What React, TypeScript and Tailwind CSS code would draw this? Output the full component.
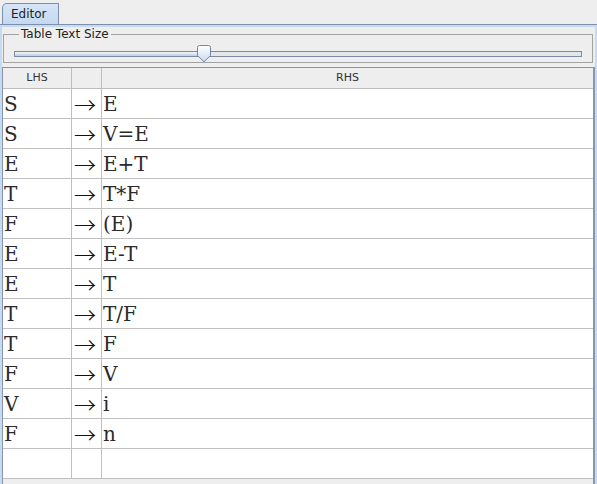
import React from "react";

const rows: [string, string][] = [
  ["S", "E"],
  ["S", "V=E"],
  ["E", "E+T"],
  ["T", "T*F"],
  ["F", "(E)"],
  ["E", "E-T"],
  ["E", "T"],
  ["T", "T/F"],
  ["T", "F"],
  ["F", "V"],
  ["V", "i"],
  ["F", "n"],
  ["", ""],
];

const serif = { fontFamily: '"DejaVu Serif", serif' };
const arrowFont = { fontFamily: '"Noto Sans CJK JP", sans-serif' };

export default function App() {
  return (
    <div
      className="w-[597px] h-[484px] bg-[#eeeeee] overflow-hidden flex flex-col text-[#222]"
      style={{ fontFamily: '"DejaVu Sans", sans-serif' }}
    >
      <div className="h-[24px] flex items-end pl-[2px] shrink-0">
        <div className="h-[21px] w-[57px] border border-b-0 border-[#7d8fab] rounded-tl-[5px] bg-gradient-to-b from-[#d6e5f6] to-[#c4d9f1] text-[12px] pl-[8px] leading-[20px] text-[#222]">
          Editor
        </div>
      </div>
      <div className="border-t border-[#7d8fab] flex-1 min-h-0 flex flex-col">
        <div className="flex-1 min-h-0 border-2 border-b-0 border-[#c6daf2] flex flex-col">
          <fieldset className="ml-[1px] mr-[2px] border border-[#a3a3a3] px-[10px] pb-0 pt-[4px] shrink-0">
            <legend className="ml-[5px] px-[2px] text-[12px] leading-[14px] text-[#222]">
              Table Text Size
            </legend>
            <div className="relative h-[17px]">
              <div className="absolute left-0 right-0 top-[6px] h-[6px] border border-[#7b8ba3] bg-[#e6e6e6] flex">
                <div className="w-[187px] h-full bg-gradient-to-b from-[#f4f8fd] to-[#b9cfea]" />
              </div>
              <svg
                className="absolute top-0 left-[182px]"
                width="16"
                height="18"
                viewBox="0 0 16 18"
              >
                <defs>
                  <linearGradient id="thumb" x1="0" y1="0" x2="0" y2="1">
                    <stop offset="0" stopColor="#ffffff" />
                    <stop offset="1" stopColor="#c9daf0" />
                  </linearGradient>
                </defs>
                <path
                  d="M1.5 2.5 Q1.5 0.5 3.5 0.5 L12.5 0.5 Q14.5 0.5 14.5 2.5 L14.5 10.5 L8 16.8 L1.5 10.5 Z"
                  fill="url(#thumb)"
                  stroke="#6f87b0"
                  strokeWidth="1"
                />
              </svg>
            </div>
          </fieldset>
          <div className="mt-[4px] border border-r-2 border-b-0 border-[#8596ad] bg-[#eeeeee] flex-1 min-h-0 overflow-hidden">
            <div className="grid grid-cols-[69px_30px_1fr] bg-white">
              <div className="h-[21px] bg-[#eeeeee] border-r border-b border-[#bdbdbd] text-[11px] text-[#333] flex items-center justify-center">
                LHS
              </div>
              <div className="h-[21px] bg-[#eeeeee] border-r border-b border-[#bdbdbd]" />
              <div className="h-[21px] bg-[#eeeeee] border-b border-[#bdbdbd] text-[11px] text-[#333] flex items-center justify-center">
                RHS
              </div>
              {rows.map(([l, r], i) => (
                <React.Fragment key={i}>
                  <div
                    className="h-[30px] border-r border-b border-[#c0c0c0] text-[20px] pl-[1px] flex items-center text-[#2a2a2a]"
                    style={serif}
                  >
                    {l}
                  </div>
                  <div
                    className="h-[30px] border-r border-b border-[#c0c0c0] text-[22px] leading-[22px] font-extralight flex items-center pl-[2px] pb-[1px] text-[#111]"
                    style={arrowFont}
                  >
                    {l ? "→" : ""}
                  </div>
                  <div
                    className="h-[30px] border-b border-[#c0c0c0] text-[20px] pl-[1px] flex items-center text-[#2a2a2a]"
                    style={serif}
                  >
                    {r}
                  </div>
                </React.Fragment>
              ))}
            </div>
          </div>
        </div>
      </div>
    </div>
  );
}
